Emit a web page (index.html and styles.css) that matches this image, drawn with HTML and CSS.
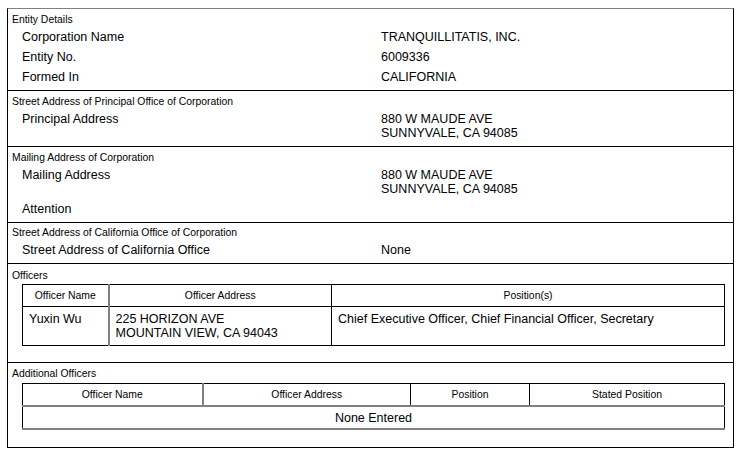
FILE: index.html
```html
<!DOCTYPE html>
<html>
<head>
<meta charset="utf-8">
<link rel="stylesheet" href="styles.css">
</head>
<body>
<div class="doc">
  <section class="sec">
    <div class="sec-title">Entity Details</div>
    <div class="row"><div class="label">Corporation Name</div><div class="value single">TRANQUILLITATIS, INC.</div></div>
    <div class="row"><div class="label">Entity No.</div><div class="value single">6009336</div></div>
    <div class="row"><div class="label">Formed In</div><div class="value single">CALIFORNIA</div></div>
  </section>
  <section class="sec">
    <div class="sec-title">Street Address of Principal Office of Corporation</div>
    <div class="row"><div class="label">Principal Address</div><div class="value multi">880 W MAUDE AVE<br>SUNNYVALE, CA 94085</div></div>
  </section>
  <section class="sec">
    <div class="sec-title">Mailing Address of Corporation</div>
    <div class="row"><div class="label">Mailing Address</div><div class="value multi">880 W MAUDE AVE<br>SUNNYVALE, CA 94085</div></div>
    <div class="row"><div class="label">Attention</div><div class="value single"></div></div>
  </section>
  <section class="sec sec-tight">
    <div class="sec-title">Street Address of California Office of Corporation</div>
    <div class="row"><div class="label">Street Address of California Office</div><div class="value single">None</div></div>
  </section>
  <section class="sec sec-loose">
    <div class="sec-title">Officers</div>
    <table class="grid officers">
      <colgroup><col class="c-name"><col class="c-addr"><col class="c-pos"></colgroup>
      <thead>
        <tr><th class="sep-gray">Officer Name</th><th>Officer Address</th><th>Position(s)</th></tr>
      </thead>
      <tbody>
        <tr><td class="sep-gray">Yuxin Wu</td><td>225 HORIZON AVE<br>MOUNTAIN VIEW, CA 94043</td><td>Chief Executive Officer, Chief Financial Officer, Secretary</td></tr>
      </tbody>
    </table>
  </section>
  <section class="sec">
    <div class="sec-title">Additional Officers</div>
    <table class="grid additional">
      <colgroup><col class="a-name"><col class="a-addr"><col class="a-pos"><col class="a-stated"></colgroup>
      <thead>
        <tr class="head-gray"><th class="sep-gray">Officer Name</th><th>Officer Address</th><th>Position</th><th>Stated Position</th></tr>
      </thead>
      <tbody>
        <tr class="body-gray"><td colspan="4" class="center">None Entered</td></tr>
      </tbody>
    </table>
  </section>
</div>
</body>
</html>
```
FILE: styles.css
```css
html, body {
  margin: 0;
  padding: 0;
  background: #fff;
}
body {
  font-family: "Liberation Sans", Arial, sans-serif;
  color: #000;
}
.doc {
  margin: 8px 0 0 7px;
  width: 727px;
  box-sizing: border-box;
  border-top: 1px solid #808080;
  border-left: 1px solid #000;
  border-right: 1px solid #000;
}
.sec {
  border-bottom: 1px solid #000;
  padding: 4px 0 3px 0;
}
.sec-tight {
  padding: 3px 0 3px 0;
}
.sec-loose {
  padding: 5px 0 3px 0;
}
.sec-title {
  font-size: 10.4px;
  line-height: 14px;
  padding-left: 4px;
}
.row {
  display: flex;
  font-size: 12.5px;
}
.label {
  width: 359px;
  padding-left: 14px;
  line-height: 20px;
}
.value.single {
  line-height: 20px;
}
.value.multi {
  line-height: 14px;
  padding: 3px 0;
}
.grid {
  border-collapse: collapse;
  width: 703px;
  table-layout: fixed;
}
.officers {
  margin: 1px 0 13px 14px;
}
.additional {
  margin: 2px 0 14px 14px;
}
.grid th, .grid td {
  border: 1px solid #000;
}
.grid th {
  font-size: 10.4px;
  font-weight: normal;
  line-height: 14px;
  padding: 4px 4px 3px;
  text-align: center;
}
.grid td {
  font-size: 12.5px;
  line-height: 14px;
  padding: 5px 6px;
  vertical-align: top;
  text-align: left;
}
.additional th {
  padding: 4px 4px 3px;
}
.additional td {
  padding: 4px 6px 3px;
}
.grid td.center {
  text-align: center;
}
.grid .sep-gray {
  border-right: 2px solid #808080;
}
.c-name { width: 86px; }
.c-addr { width: 223px; }
.c-pos { width: auto; }
.a-name { width: 180px; }
.a-addr { width: 208px; }
.a-pos { width: 119px; }
.a-stated { width: auto; }
.head-gray th {
  border-bottom: 2px solid #808080;
}
.body-gray td {
  border-bottom: 2px solid #808080;
}
```
